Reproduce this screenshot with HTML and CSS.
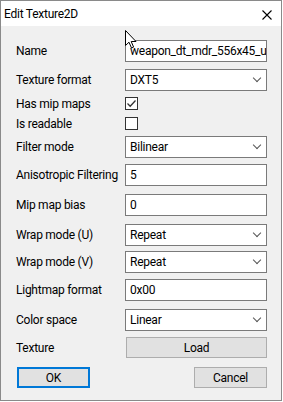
FILE: index.html
```html
<!DOCTYPE html>
<html lang="en">
<head>
    <meta charset="UTF-8">
    <title>Edit Texture2D</title>
    <link rel="stylesheet" href="styles.css">
</head>
<body>
    <div class="window">
        <div class="titlebar">
            <span class="title">Edit Texture2D</span>
            <svg class="close" width="10" height="10" viewBox="0 0 10 10">
                <path d="M0.5 0.5 L9.5 9.5 M9.5 0.5 L0.5 9.5" stroke="#000" stroke-width="1.1" fill="none"/>
            </svg>
        </div>
        <div class="content">
            <div class="form">
                <div class="lbl">Name</div>
                <div class="box"><span class="val">weapon_dt_mdr_556x45_up</span></div>

                <div class="lbl">Texture format</div>
                <div class="box select"><span class="val">DXT5</span><span class="chev"></span></div>

                <div class="lbl sm">Has mip maps</div>
                <div class="check">
                    <svg width="11" height="11" viewBox="0 0 11 11">
                        <path d="M1.5 5.5 L4.2 8.2 L9.5 2.5" stroke="#333" stroke-width="1.3" fill="none"/>
                    </svg>
                </div>

                <div class="lbl sm">Is readable</div>
                <div class="check"></div>

                <div class="lbl">Filter mode</div>
                <div class="box select"><span class="val">Bilinear</span><span class="chev"></span></div>

                <div class="lbl">Anisotropic Filtering</div>
                <div class="box"><span class="val">5</span></div>

                <div class="lbl">Mip map bias</div>
                <div class="box"><span class="val">0</span></div>

                <div class="lbl">Wrap mode (U)</div>
                <div class="box select"><span class="val">Repeat</span><span class="chev"></span></div>

                <div class="lbl">Wrap mode (V)</div>
                <div class="box select"><span class="val">Repeat</span><span class="chev"></span></div>

                <div class="lbl">Lightmap format</div>
                <div class="box"><span class="val">0x00</span></div>

                <div class="lbl">Color space</div>
                <div class="box select"><span class="val">Linear</span><span class="chev"></span></div>

                <div class="lbl">Texture</div>
                <div class="btn load">Load</div>

                <div class="buttons">
                    <div class="btn ok">OK</div>
                    <div class="btn">Cancel</div>
                </div>
            </div>
        </div>
        <svg class="cursor" width="12" height="19" viewBox="0 0 12 19">
            <path d="M0.5 0.5 L0.5 15.5 L4 12.2 L6.5 18 L8.6 17.1 L6.2 11.5 L11 11.5 Z" fill="#fff" stroke="#000" stroke-width="1" stroke-linejoin="miter"/>
        </svg>
    </div>
</body>
</html>
```

FILE: styles.css
```css
body{
    margin: 0;
    background: #fff;
    font-family: Roboto, "Liberation Sans", sans-serif;
    font-size: 12px;
    letter-spacing: -0.25px;
    color: #000;
}
.window{
    position: relative;
    box-sizing: border-box;
    width: 282px;
    height: 401px;
    border: 1px solid #8a8a8a;
    background: #f0f0f0;
}
.titlebar{
    height: 25px;
    background: #fff;
    display: flex;
    align-items: center;
    justify-content: space-between;
    padding: 0 9px 0 3px;
}
.title{
    font-size: 12px;
    padding-top: 1px;
}
.close{
    display: block;
    margin-top: 2px;
}
.content{
    padding: 14px 0 0 15px;
}
.form{
    display: grid;
    grid-template-columns: 109px 142px;
    grid-template-rows: 29px 28px 20px 19px 28px 30px 30px 27px 28px 30px 28px 30px auto;
    align-items: start;
}
.lbl{
    height: 22px;
    display: flex;
    align-items: center;
    white-space: nowrap;
}
.lbl.sm{
    height: 13px;
}
.box{
    box-sizing: border-box;
    height: 22px;
    border: 1px solid #7a7a7a;
    background: #fff;
    display: flex;
    align-items: center;
    padding-left: 4px;
    overflow: hidden;
}
.val{
    white-space: nowrap;
    flex: 1;
}
.select{
    padding-right: 5px;
}
.chev{
    width: 5px;
    height: 5px;
    border-right: 1px solid #555;
    border-bottom: 1px solid #555;
    transform: rotate(45deg);
    margin-top: -4px;
    margin-right: 1px;
}
.check{
    box-sizing: border-box;
    width: 13px;
    height: 13px;
    border: 1px solid #333;
    background: #fff;
}
.check svg{
    display: block;
}
.btn{
    box-sizing: border-box;
    height: 21px;
    border: 1px solid #adadad;
    background: #e1e1e1;
    display: flex;
    align-items: center;
    justify-content: center;
}
.load{
    margin-left: 1px;
}
.buttons{
    grid-column: 1 / -1;
    display: flex;
    justify-content: space-between;
    padding-left: 1px;
}
.buttons .btn{
    width: 73px;
}
.btn.ok{
    border: 2px solid #0078d7;
}
.cursor{
    position: absolute;
    left: 124px;
    top: 29px;
}
```
